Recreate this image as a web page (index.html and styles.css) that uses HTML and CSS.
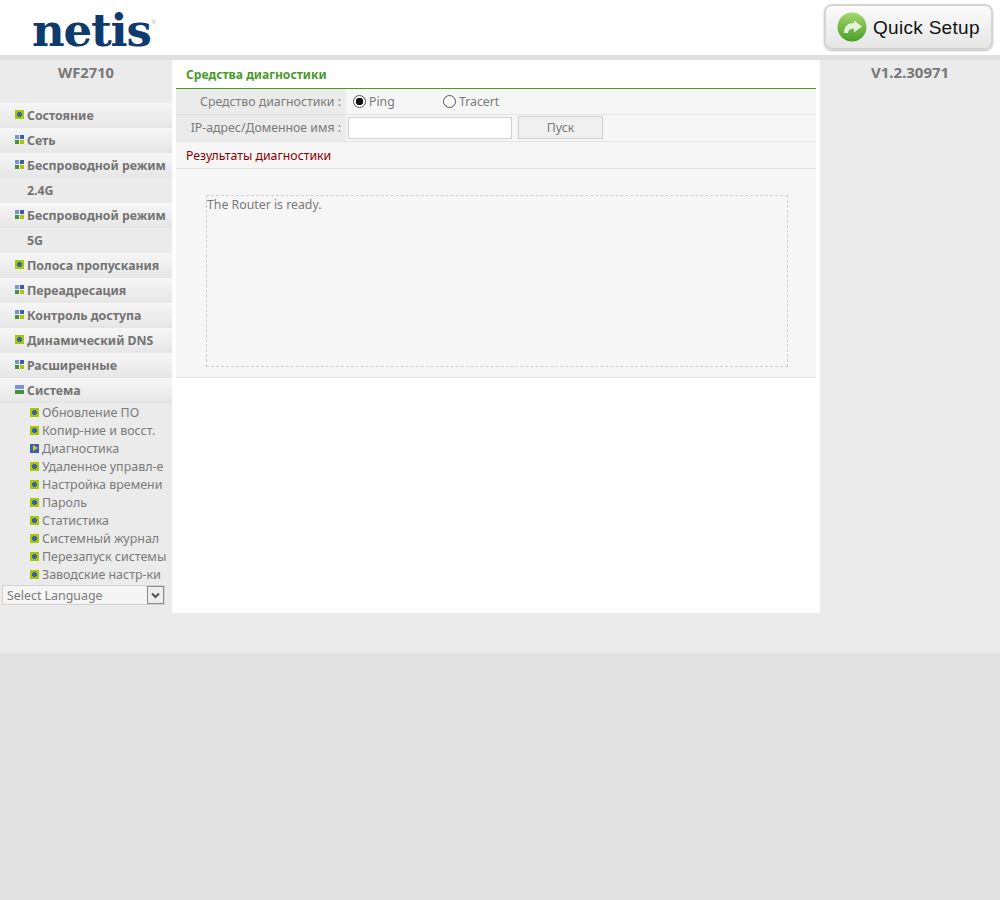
FILE: index.html
```html
<!DOCTYPE html>
<html lang="ru">
<head>
<meta charset="utf-8">
<title>netis WF2710</title>
<link rel="stylesheet" href="styles.css">
</head>
<body>
<header class="top">
  <div class="logo"><span class="logo-text">netis</span><span class="reg">®</span></div>
  <a class="quick">
    <svg class="quick-icon" width="30" height="30" viewBox="0 0 30 30">
      <defs>
        <linearGradient id="qg" x1="0" y1="0" x2="0" y2="1">
          <stop offset="0" stop-color="#a5d86a"/>
          <stop offset="1" stop-color="#4a9e2a"/>
        </linearGradient>
      </defs>
      <circle cx="15" cy="15" r="14.5" fill="url(#qg)"/>
      <path d="M7 21C7 14 11 11 17 11V8.500L25 14.500 17 20.500V17C13.500 16 11.500 18 11 21z" fill="#e6f1da"/>
    </svg>
    <span class="quick-text">Quick Setup</span>
  </a>
</header>
<div class="strip"></div>
<div class="layout">
  <nav class="side">
    <div class="model">WF2710</div>
    <ul class="menu">
      <li class="item"><i class="ic ic-dot"></i>Состояние</li>
      <li class="item"><i class="ic ic-grid"></i>Сеть</li>
      <li class="item"><i class="ic ic-grid"></i>Беспроводной режим</li>
      <li class="item item-cont">2.4G</li>
      <li class="item"><i class="ic ic-grid"></i>Беспроводной режим</li>
      <li class="item item-cont">5G</li>
      <li class="item"><i class="ic ic-dot"></i>Полоса пропускания</li>
      <li class="item"><i class="ic ic-grid"></i>Переадресация</li>
      <li class="item"><i class="ic ic-grid"></i>Контроль доступа</li>
      <li class="item"><i class="ic ic-dot"></i>Динамический DNS</li>
      <li class="item"><i class="ic ic-grid"></i>Расширенные</li>
      <li class="item"><i class="ic ic-open"></i>Система</li>
    </ul>
    <ul class="sub">
      <li class="sub-item"><i class="ic ic-dot"></i>Обновление ПО</li>
      <li class="sub-item"><i class="ic ic-dot"></i>Копир-ние и восст.</li>
      <li class="sub-item"><i class="ic ic-cur"></i>Диагностика</li>
      <li class="sub-item"><i class="ic ic-dot"></i>Удаленное управл-е</li>
      <li class="sub-item"><i class="ic ic-dot"></i>Настройка времени</li>
      <li class="sub-item"><i class="ic ic-dot"></i>Пароль</li>
      <li class="sub-item"><i class="ic ic-dot"></i>Статистика</li>
      <li class="sub-item"><i class="ic ic-dot"></i>Системный журнал</li>
      <li class="sub-item"><i class="ic ic-dot"></i>Перезапуск системы</li>
      <li class="sub-item"><i class="ic ic-dot"></i>Заводские настр-ки</li>
    </ul>
    <div class="lang"><span class="lang-text">Select Language</span><span class="lang-btn"><svg width="9" height="7" viewBox="0 0 9 7"><path d="M1 1.500l3.500 3.500 3.500-3.500" fill="none" stroke="#555" stroke-width="2"/></svg></span></div>
  </nav>
  <main class="main">
    <div class="panel">
      <h1 class="title">Средства диагностики</h1>
      <div class="row">
        <div class="label">Средство диагностики :</div>
        <div class="value">
          <label class="opt opt-ping"><input class="radio" type="radio" name="tool" checked>Ping</label>
          <label class="opt"><input class="radio" type="radio" name="tool">Tracert</label>
        </div>
      </div>
      <div class="row row-ip">
        <div class="label">IP-адрес/Доменное имя :</div>
        <div class="value value-ip">
          <input class="field" type="text">
          <button class="btn" type="button">Пуск</button>
        </div>
      </div>
      <div class="results-head">Результаты диагностики</div>
      <div class="results">
        <div class="log">The Router is ready.</div>
      </div>
    </div>
  </main>
  <aside class="right">V1.2.30971</aside>
</div>
<div class="band"></div>
</body>
</html>
```
FILE: styles.css
```css
* { box-sizing: border-box; }
html, body { margin: 0; padding: 0; }
body {
  background: #e1e1e1;
  font-family: "Noto Sans", "Open Sans", sans-serif;
  font-size: 12.3px;
  color: #7a7a7a;
  min-height: 900px;
}
ul { list-style: none; margin: 0; padding: 0; }

.top {
  height: 55px;
  background: #fff;
  display: flex;
  justify-content: space-between;
  align-items: flex-start;
  padding-right: 7px;
}
.logo {
  margin: 4px 0 0 32px;
  display: flex;
  align-items: flex-start;
  height: 50px;
}
.logo-text {
  font-family: "DejaVu Serif", "Liberation Serif", serif;
  font-weight: 700;
  font-size: 45px;
  line-height: 54px;
  letter-spacing: -1.2px;
  color: #0f3a6e;
}
.reg {
  margin: 14px 0 0 1px;
  font-size: 6px;
  line-height: 8px;
  font-family: "Liberation Sans", sans-serif;
  color: #9aa9bd;
}
.quick {
  margin-top: 4px;
  width: 169px;
  height: 46px;
  border: 2px solid #d4d4d4;
  border-radius: 8px;
  background: linear-gradient(#fbfbfb, #e6e6e6);
  box-shadow: 0 1px 2px rgba(0,0,0,.25);
  display: flex;
  align-items: center;
  padding-left: 11px;
  gap: 6px;
}
.quick-icon { flex: none; }
.quick-text {
  margin-top: 1px;
  font-family: "Liberation Sans", Arial, sans-serif;
  font-size: 19px;
  letter-spacing: .3px;
  color: #111;
  white-space: nowrap;
}
.strip { height: 5px; background: #e0e0e0; }

.layout {
  display: flex;
  height: 553px;
  background: #ebebeb;
}
.side { width: 172px; flex: none; }
.model {
  height: 43px;
  padding-top: 1px;
  text-align: center;
  font-weight: 700;
  font-size: 14.7px;
  line-height: 22px;
  color: #777;
}
.item {
  height: 25px;
  line-height: 25px;
  padding-left: 15px;
  font-weight: 700;
  font-size: 12.300px;
  white-space: nowrap;
  color: #737373;
  background: linear-gradient(#f6f6f6, #e6e6e6);
  display: flex;
  align-items: center;
}
.item .ic { margin-top: -2px; }
.item-cont { padding-left: 27px; background: #ebebeb; }
.ic {
  flex: none;
  display: block;
  width: 9px;
  height: 9px;
  margin-right: 3px;
  position: relative;
}
.ic-dot {
  background:
    linear-gradient(#3a5fb8, #3a5fb8) center / 5px 3px no-repeat,
    linear-gradient(#3a5fb8, #3a5fb8) center / 3px 5px no-repeat,
    #a5c800;
}
.ic-grid {
  background:
    linear-gradient(#7b93cf, #7b93cf) 0 0 / 4px 4px no-repeat,
    linear-gradient(#3a5fa8, #3a5fa8) 100% 0 / 4px 4px no-repeat,
    linear-gradient(#4c8f3a, #4c8f3a) 0 100% / 4px 4px no-repeat,
    linear-gradient(#a5c800, #a5c800) 100% 100% / 4px 4px no-repeat;
}
.ic-open {
  background:
    linear-gradient(#7b93cf, #7b93cf) 0 0 / 9px 4px no-repeat,
    linear-gradient(#4c8f3a, #4c8f3a) 0 100% / 9px 4px no-repeat;
}
.ic-cur { background: #3a5fb8; }
.ic-cur::after {
  content: "";
  position: absolute;
  left: 3px;
  top: 1px;
  border-left: 5px solid #d8d000;
  border-top: 3.500px solid transparent;
  border-bottom: 3.500px solid transparent;
}
.sub-item {
  height: 18px;
  padding-left: 30px;
  display: flex;
  align-items: center;
  white-space: nowrap;
  font-size: 12.45px;
  color: #7a7a7a;
}
.lang {
  margin: 2px 0 0 2px;
  width: 163px;
  height: 20px;
  border: 1px solid #d2d2d2;
  background: #f5f5f5;
  display: flex;
  align-items: center;
  justify-content: space-between;
  padding-left: 4px;
  font-size: 12.4px;
  color: #7a7a7a;
}
.lang-btn {
  width: 17px;
  height: 18px;
  border: 1px solid #8c8c8c;
  background: #eee;
  display: flex;
  align-items: center;
  justify-content: center;
}

.main { width: 648px; flex: none; background: #fff; padding: 0 4px; }
.panel { display: flex; flex-direction: column; }
.title {
  margin: 0;
  height: 29px;
  padding: 6px 0 0 10px;
  font-size: 12.1px;
  line-height: 18px;
  font-weight: 700;
  color: #4a9a2a;
  border-bottom: 1px solid #4a9a2a;
}
.row {
  display: flex;
  height: 26px;
  background: #f6f6f6;
  border-bottom: 1px solid #e2e2e2;
}
.row-ip { height: 27px; }
.label {
  width: 170px;
  flex: none;
  background: #ebebeb;
  text-align: right;
  padding-right: 5px;
  line-height: 25px;
  white-space: nowrap;
}
.value { display: flex; align-items: center; padding-left: 7px; }
.opt { display: flex; align-items: center; gap: 3px; width: 90px; }
.radio {
  appearance: none;
  width: 13px;
  height: 13px;
  margin: 0;
  border: 1px solid #555;
  border-radius: 50%;
  background: #fff;
}
.radio:checked { background: radial-gradient(circle, #111 3.500px, #fff 4px); }
.value-ip { padding-left: 2px; gap: 6px; }
.field {
  width: 164px;
  height: 22px;
  border: 1px solid #d2d2d2;
  background: #fff;
  padding: 0;
}
.btn {
  width: 85px;
  height: 23px;
  margin-bottom: 2px;
  border: 1px solid #cfcfcf;
  background: #f0f0f0;
  font: inherit;
  color: #7a7a7a;
  padding: 0;
}
.results-head {
  height: 27px;
  background: #f6f6f6;
  border-bottom: 1px solid #e2e2e2;
  padding-left: 10px;
  line-height: 27px;
  color: #8b0000;
}
.results {
  height: 209px;
  background: #f6f6f6;
  border-bottom: 1px solid #e2e2e2;
  padding: 26px 28px 0 30px;
}
.log {
  height: 172px;
  border: 1px dashed #cfcfcf;
  line-height: 17px;
}
.right {
  flex: 1;
  text-align: center;
  font-weight: 700;
  font-size: 15px;
  line-height: 22px;
  padding-top: 1px;
  color: #777;
}
.band { height: 40px; background: #ebebeb; }
```
